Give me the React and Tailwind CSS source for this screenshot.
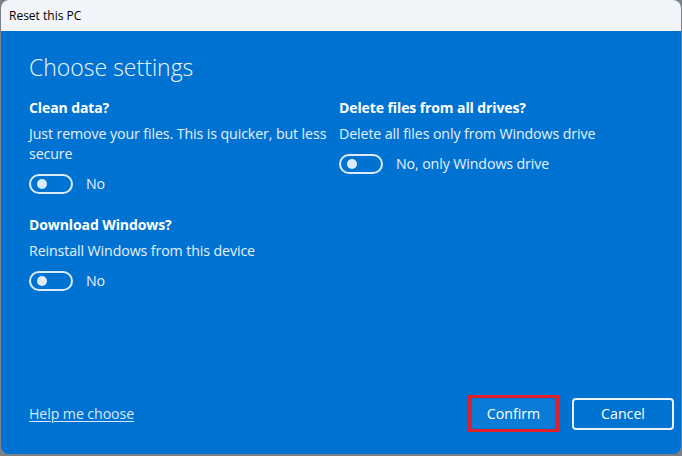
import { useState } from 'react'

const font = { fontFamily: '"Open Sans", "Noto Sans", sans-serif' }

function Toggle({ label }) {
  return (
    <div className="flex items-center gap-[13px] mt-[10px]">
      <div className="w-[44px] h-[20px] rounded-full border-2 border-[#dcebfb] flex items-center pl-[6px]">
        <div className="w-[10px] h-[10px] rounded-full bg-[#dcebfb]" />
      </div>
      <span className="text-[14.2px] leading-[20px] tracking-[-0.1px]">{label}</span>
    </div>
  )
}

function Setting({ title, desc, value, className = '' }) {
  return (
    <div className={className}>
      <div className="text-[14px] leading-[20px] font-bold text-white tracking-[-0.1px]">{title}</div>
      <div className="text-[14.2px] leading-[20px] mt-[6px] tracking-[-0.1px]">{desc}</div>
      <Toggle label={value} />
    </div>
  )
}

export default function App() {
  const [choice] = useState(null)

  return (
    <div className="w-[682px] h-[456px] bg-[#7b7f86] pl-px pb-[2px]" style={font}>
      <div className="w-[680px] h-[454px] rounded-[8px] overflow-hidden flex flex-col bg-[#0073d2]">
        {/* Title bar */}
        <div className="h-[31px] bg-[#f1f4f9] flex items-center pl-[8px] text-[12px] text-black">
          Reset this PC
        </div>

        {/* Body */}
        <div className="flex-1 flex flex-col px-[28px] pt-[20px] pb-[22px] text-[#e6f1fc]">
          <h1 className="text-[23px] leading-[32px] font-light text-[#eef6fe]">Choose settings</h1>

          <div className="grid grid-cols-[310px_1fr] mt-[15px]">
            <div>
              <Setting
                title="Clean data?"
                desc="Just remove your files. This is quicker, but less secure"
                value="No"
              />
              <Setting
                title="Download Windows?"
                desc="Reinstall Windows from this device"
                value="No"
                className="mt-[21px]"
              />
            </div>
            <Setting
              title="Delete files from all drives?"
              desc="Delete all files only from Windows drive"
              value="No, only Windows drive"
            />
          </div>

          <div className="mt-auto flex items-center">
            <a href="#" className="text-[14.2px] underline underline-offset-2 text-[#d7e9fb] tracking-[-0.1px]">
              Help me choose
            </a>
            <div className="ml-auto flex items-center gap-[13px] mr-[-21px]">
              <div className="border-[3px] border-[#e0202a] p-px">
                <button className="w-[83px] h-[29px] rounded-[3px] bg-[#0a7bd6] text-[14.2px] text-white">
                  Confirm
                </button>
              </div>
              <button className="w-[102px] h-[32px] rounded-[4px] border-2 border-[#eaf3fd] text-[14.2px] text-white">
                Cancel
              </button>
            </div>
          </div>
        </div>
      </div>
      {choice}
    </div>
  )
}
